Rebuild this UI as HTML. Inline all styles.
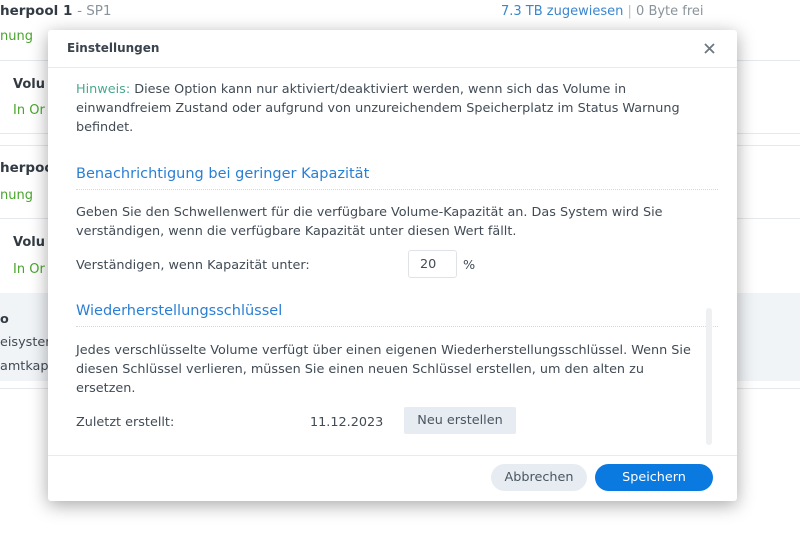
<!DOCTYPE html>
<html><head><meta charset="utf-8"><style>
*{margin:0;padding:0;box-sizing:border-box}
body{width:800px;height:535px;overflow:hidden;background:#fff;font-family:"DejaVu Sans","Liberation Sans",sans-serif;font-size:12.8px;color:#414b55;position:relative}
.a{position:absolute;white-space:nowrap}
.line{position:absolute;left:0;width:800px;height:1px;background:#e6e9ec}
.dlg{position:absolute;left:48px;top:30px;width:689px;height:471px;background:#fff;border-radius:3px;box-shadow:0 4px 18px rgba(0,0,0,.35)}
.blue{color:#2a7fd4}
.hdr{position:absolute;left:0;top:37px;width:689px;height:1px;background:#e8ebee}
.dot{position:absolute;left:28px;width:642px;border-top:1px dotted #d5d9dd}
.p{line-height:19px;white-space:normal;width:625px}
</style></head><body>
<div class="a" style="left:0;top:3px;font-weight:bold;font-size:13.5px;color:#323b44">herpool 1 <span style="font-weight:normal;color:#8a939b">- SP1</span></div>
<div class="a" style="left:501px;top:4px;font-size:13px"><span style="color:#3a86cf">7.3 TB zugewiesen</span> <span style="color:#b8bec4">|</span> <span style="color:#8a939b">0 Byte frei</span></div>
<div class="a" style="left:0;top:29px;color:#4aa52e;font-size:13px">nung</div>
<div class="line" style="top:60px"></div>
<div class="a" style="left:13px;top:77px;font-weight:bold;color:#323b44;font-size:13px">Volu</div>
<div class="a" style="left:13px;top:103px;color:#4aa52e;font-size:13px">In Or</div>
<div class="line" style="top:133px"></div>
<div class="line" style="top:145px"></div>
<div class="a" style="left:0;top:160px;font-weight:bold;color:#323b44;font-size:13.5px">herpoo</div>
<div class="a" style="left:0;top:188px;color:#4aa52e;font-size:13px">nung</div>
<div class="line" style="top:218px"></div>
<div class="a" style="left:13px;top:235px;font-weight:bold;color:#323b44;font-size:13px">Volu</div>
<div class="a" style="left:13px;top:262px;color:#4aa52e;font-size:13px">In Or</div>
<div style="position:absolute;left:0;top:293px;width:800px;height:88px;background:#f1f4f7"></div>
<div class="a" style="left:0;top:312px;font-weight:bold;color:#323b44">o</div>
<div class="a" style="left:0;top:335px">eisysten</div>
<div class="a" style="left:0;top:359px">amtkapa</div>
<div class="line" style="top:388px"></div>

<div class="dlg">
<div class="a" style="left:19px;top:11px;font-weight:bold;font-size:12px;color:#3b444d">Einstellungen</div>
<svg class="a" style="left:656px;top:13px" width="11" height="11" viewBox="0 0 11 11"><path d="M1 1L10 10M10 1L1 10" stroke="#6e767e" stroke-width="1.8"/></svg>
<div class="hdr"></div>
<div style="position:absolute;left:0;top:38px;width:689px;height:378px;overflow:hidden">
<div class="a p" style="left:28px;top:12px"><span style="color:#4aa88f">Hinweis:</span> Diese Option kann nur aktiviert/deaktiviert werden, wenn sich das Volume in einwandfreiem Zustand oder aufgrund von unzureichendem Speicherplatz im Status Warnung befindet.</div>
<div style="position:absolute;left:0;top:0;width:689px;height:12px;background:#fff"></div>
<div class="a blue" style="left:28px;top:98px;font-size:14.5px">Benachrichtigung bei geringer Kapazität</div>
<div class="dot" style="top:121px"></div>
<div class="a p" style="left:28px;top:135px">Geben Sie den Schwellenwert für die verfügbare Volume-Kapazität an. Das System wird Sie verständigen, wenn die verfügbare Kapazität unter diesen Wert fällt.</div>
<div class="a" style="left:28px;top:188px;line-height:19px">Verständigen, wenn Kapazität unter:</div>
<div class="a" style="left:360px;top:182px;width:49px;height:28px;border:1px solid #dfe3e7;border-radius:3px;padding:6px 0 0 11px">20</div>
<div class="a" style="left:415px;top:188px;line-height:19px">%</div>
<div class="a blue" style="left:28px;top:235px;font-size:14.5px">Wiederherstellungsschlüssel</div>
<div class="dot" style="top:258px"></div>
<div class="a p" style="left:28px;top:273px">Jedes verschlüsselte Volume verfügt über einen eigenen Wiederherstellungsschlüssel. Wenn Sie diesen Schlüssel verlieren, müssen Sie einen neuen Schlüssel erstellen, um den alten zu ersetzen.</div>
<div class="a" style="left:28px;top:345px;line-height:19px">Zuletzt erstellt:</div>
<div class="a" style="left:262px;top:345px;line-height:19px">11.12.2023</div>
<div class="a" style="left:356px;top:339px;width:112px;height:27px;background:#e6ecf1;border-radius:2px;text-align:center;line-height:27px;color:#4b555f">Neu erstellen</div>
<div class="a" style="left:658px;top:240px;width:6px;height:137px;background:#eef0f2;border-radius:3px"></div>
</div>
<div class="hdr" style="top:425px"></div>
<div class="a" style="left:443px;top:434px;width:96px;height:27px;background:#e6ecf1;border-radius:14px;text-align:center;line-height:27px;color:#4b555f">Abbrechen</div>
<div class="a" style="left:547px;top:434px;width:118px;height:27px;background:#0a79e0;border-radius:14px;text-align:center;line-height:27px;color:#fff">Speichern</div>
</div>
</body></html>
